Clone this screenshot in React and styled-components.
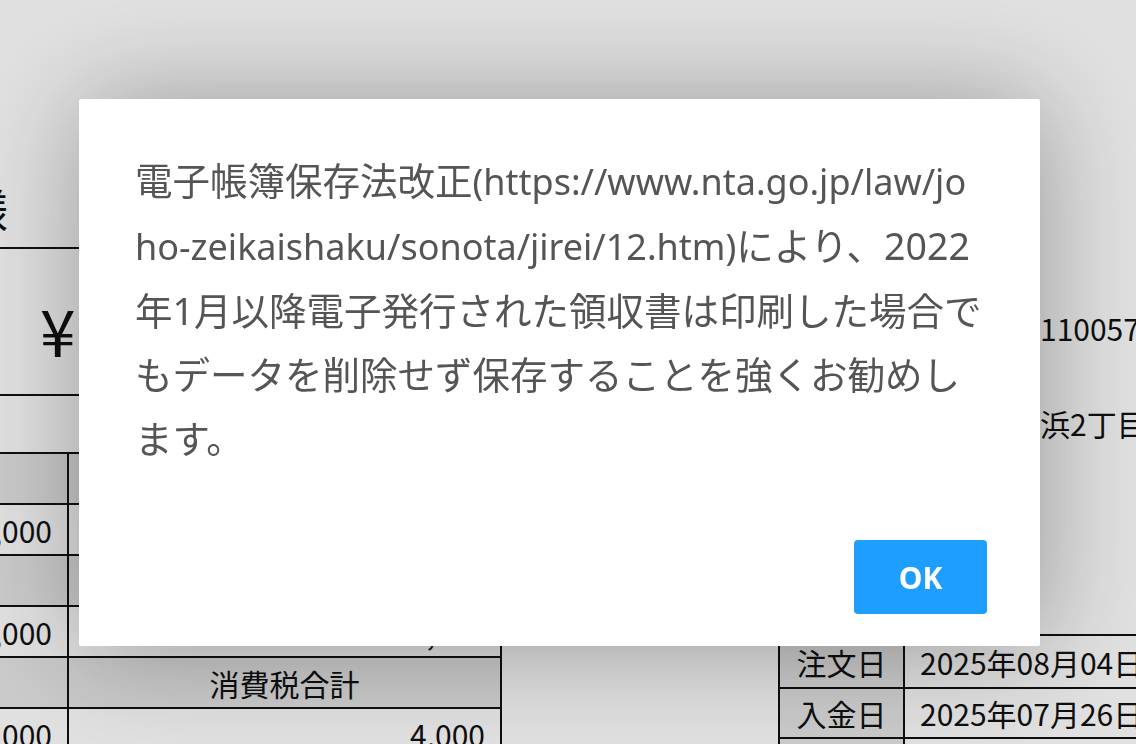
import React from 'react'
import styled, { createGlobalStyle } from 'styled-components'

const GlobalStyle = createGlobalStyle`
  html, body {
    margin: 0;
    padding: 0;
    background: #fff;
  }
  body {
    font-family: "Noto Sans CJK JP", "Noto Sans", sans-serif;
  }
`

const Page = styled.div`
  width: 1256px;
  height: 744px;
  overflow: hidden;
  display: grid;
  grid-template-columns: 622px 276px 358px;
  margin-left: -120px;
  color: #111;
  font-family: "Noto Sans CJK JP", sans-serif;
`

const LeftCol = styled.div`
  display: flex;
  flex-direction: column;
`

const NameRow = styled.div`
  height: 249px;
  border-bottom: 2px solid #111;
  box-sizing: border-box;
  display: flex;
  align-items: flex-end;
  padding-bottom: 16px;
`

const NameText = styled.span`
  display: inline-block;
  width: 128px;
  text-align: right;
  font-size: 46px;
  line-height: 1;
  white-space: nowrap;
`

const AmountRow = styled.div`
  height: 147px;
  border-bottom: 2px solid #111;
  box-sizing: border-box;
  display: flex;
  align-items: center;
  gap: 40px;
  padding-left: 160px;
  padding-top: 14px;
  font-size: 64px;
`

const Spacer = styled.div`
  height: 56px;
`

const Table = styled.div`
  display: grid;
  grid-template-columns: ${p => p.$cols};
  border-top: 2px solid #111;
  border-left: ${p => (p.$edge ? '2px solid #111' : 'none')};
`

const Cell = styled.div`
  height: ${p => p.$h || 51}px;
  box-sizing: border-box;
  border-bottom: 2px solid #111;
  border-right: 2px solid #111;
  background: ${p => (p.$head ? '#e6e6e6' : '#fff')};
  display: flex;
  align-items: center;
  justify-content: ${p => p.$align || 'flex-end'};
  padding: 0 15px;
  font-size: 30px;
  white-space: nowrap;
  overflow: hidden;
`

const MidCol = styled.div``

const RightCol = styled.div`
  display: flex;
  flex-direction: column;
`

const InfoLine = styled.div`
  height: ${p => p.$h}px;
  display: flex;
  align-items: flex-end;
  padding-left: 262px;
  font-size: 30px;
  white-space: nowrap;
`

const Overlay = styled.div`
  position: fixed;
  inset: 0;
  background: rgba(0, 0, 0, 0.12);
`

const Dialog = styled.div`
  position: fixed;
  left: 79px;
  top: 99px;
  width: 961px;
  height: 547px;
  box-sizing: border-box;
  background: #fff;
  border-radius: 2px;
  box-shadow: 2px 2px 110px rgba(0, 0, 0, 0.32);
  display: flex;
  flex-direction: column;
  padding: 50px 53px 32px 56px;
`

const Message = styled.div`
  flex: 1;
  padding-right: 2px;
  font-family: "Noto Sans", "Noto Sans CJK JP", sans-serif;
  font-size: 37.5px;
  line-height: 64px;
  color: #555;
  word-break: break-all;
`

const Url = styled.span`
  font-size: 36px;
`

const Actions = styled.div`
  display: flex;
  justify-content: flex-end;
`

const OkButton = styled.button`
  width: 133px;
  height: 74px;
  border: none;
  border-radius: 4px;
  background: #1e9fff;
  color: #fff;
  font-family: "Noto Sans", "Open Sans", sans-serif;
  font-weight: 700;
  font-size: 30px;
  cursor: pointer;
`

export default function App() {
  return (
    <>
      <GlobalStyle />
      <Page>
        <LeftCol>
          <NameRow>
            <NameText>様</NameText>
          </NameRow>
          <AmountRow>
            <span>¥</span>
            <span>44,000-</span>
          </AmountRow>
          <Spacer />
          <Table $cols="189px 433px">
            <Cell $head />
            <Cell $head $align="center">小計</Cell>
            <Cell>40,000</Cell>
            <Cell>40,000</Cell>
            <Cell $head />
            <Cell $head $align="center">合計</Cell>
            <Cell>44,000</Cell>
            <Cell>44,000</Cell>
            <Cell $head />
            <Cell $head $align="center">消費税合計</Cell>
            <Cell>44,000</Cell>
            <Cell>4,000</Cell>
          </Table>
        </LeftCol>
        <MidCol />
        <RightCol>
          <InfoLine $h={350}>1100572</InfoLine>
          <InfoLine $h={95}>浜2丁目1-1</InfoLine>
          <InfoLine $h={189} />
          <Table $cols="125px 300px" $edge>
            <Cell $head $align="center" $h={53}>注文日</Cell>
            <Cell $align="flex-start" $h={53}>2025年08月04日</Cell>
            <Cell $head $align="center" $h={50}>入金日</Cell>
            <Cell $align="flex-start" $h={50}>2025年07月26日</Cell>
            <Cell $head $align="center" $h={50}>発行日</Cell>
            <Cell $align="flex-start" $h={50}>2025年08月04日</Cell>
          </Table>
        </RightCol>
      </Page>
      <Overlay />
      <Dialog>
        <Message>
          電子帳簿保存法改正<Url>(https://www.nta.go.jp/law/joho-zeikaishaku/sonota/jirei/12.htm)</Url>により、2022年1月以降電子発行された領収書は印刷した場合でもデータを削除せず保存することを強くお勧めします。
        </Message>
        <Actions>
          <OkButton>OK</OkButton>
        </Actions>
      </Dialog>
    </>
  )
}
